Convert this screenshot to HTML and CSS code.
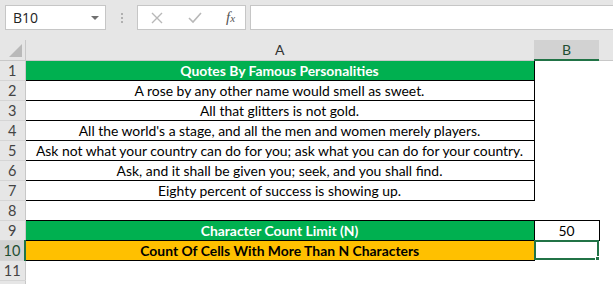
FILE: index.html
```html
<!DOCTYPE html>
<html lang="en">
<head>
    <meta charset="UTF-8">
    <title>Book1</title>
    <link rel="stylesheet" href="styles.css">
</head>
<body>
<div class="formula-bar">
    <div class="name-box">
        <span>B10</span>
        <span class="arrow"></span>
    </div>
    <div class="grip"><i></i><i></i><i></i></div>
    <div class="fx-box">
        <svg class="btn-x" width="12" height="12" viewBox="0 0 12 12"><path d="M1 1L11 11M11 1L1 11" stroke="#b8b8b8" stroke-width="1.4" fill="none"/></svg>
        <svg class="btn-ok" width="14" height="12" viewBox="0 0 14 12"><path d="M1 6L5 10L13 1" stroke="#b8b8b8" stroke-width="1.6" fill="none"/></svg>
        <span class="fx">f<sub>x</sub></span>
    </div>
    <div class="formula-input"></div>
</div>

<table class="sheet">
    <colgroup>
        <col class="c-head">
        <col class="c-a">
        <col class="c-b">
        <col>
    </colgroup>
    <tr class="col-heads">
        <th class="corner"><span class="tri"></span></th>
        <th>A</th>
        <th class="sel-head">B</th>
        <th></th>
    </tr>
    <tr>
        <th>1</th>
        <td class="box green title">Quotes By Famous Personalities</td>
        <td></td><td></td>
    </tr>
    <tr>
        <th>2</th>
        <td class="box">A rose by any other name would smell as sweet.</td>
        <td></td><td></td>
    </tr>
    <tr>
        <th>3</th>
        <td class="box">All that glitters is not gold.</td>
        <td></td><td></td>
    </tr>
    <tr>
        <th>4</th>
        <td class="box">All the world's a stage, and all the men and women merely players.</td>
        <td></td><td></td>
    </tr>
    <tr>
        <th>5</th>
        <td class="box">Ask not what your country can do for you; ask what you can do for your country.</td>
        <td></td><td></td>
    </tr>
    <tr>
        <th>6</th>
        <td class="box">Ask, and it shall be given you; seek, and you shall find.</td>
        <td></td><td></td>
    </tr>
    <tr>
        <th>7</th>
        <td class="box">Eighty percent of success is showing up.</td>
        <td></td><td></td>
    </tr>
    <tr>
        <th>8</th>
        <td></td><td></td><td></td>
    </tr>
    <tr>
        <th>9</th>
        <td class="box green title">Character Count Limit (N)</td>
        <td class="box">50</td>
        <td></td>
    </tr>
    <tr>
        <th class="sel-row">10</th>
        <td class="box orange title">Count Of Cells With More Than N Characters</td>
        <td class="active"></td>
        <td></td>
    </tr>
    <tr>
        <th>11</th>
        <td></td><td></td><td></td>
    </tr>
    <tr>
        <th></th>
        <td></td><td></td><td></td>
    </tr>
</table>
</body>
</html>
```

FILE: styles.css
```css
* {
    padding: 0;
    margin: 0;
    box-sizing: border-box;
}
body {
    width: 613px;
    height: 284px;
    overflow: hidden;
    background: #e6e6e6;
    font-family: Lato, "Liberation Sans", sans-serif;
}

/* formula bar */
.formula-bar {
    display: flex;
    align-items: center;
    height: 40px;
    padding: 0 0 5px 5px;
}
.name-box {
    width: 101px;
    height: 25px;
    background: #fff;
    border: 1px solid #c6c6c6;
    display: flex;
    align-items: center;
    justify-content: space-between;
    padding: 0 6px 0 7px;
    font-family: "Open Sans", "Liberation Sans", sans-serif;
    font-size: 14px;
    color: #222;
}
.arrow {
    width: 0;
    height: 0;
    border-left: 4px solid transparent;
    border-right: 4px solid transparent;
    border-top: 4px solid #707070;
}
.grip {
    width: 31px;
    display: flex;
    flex-direction: column;
    align-items: center;
    gap: 2px;
}
.grip i {
    width: 2px;
    height: 2px;
    background: #b0b0b0;
}
.fx-box {
    width: 109px;
    height: 25px;
    background: #fff;
    border: 1px solid #c6c6c6;
    display: flex;
    align-items: center;
    padding-left: 13px;
}
.btn-x {
    margin-right: 25px;
}
.btn-ok {
    margin-right: 24px;
}
.fx {
    font-family: "Liberation Serif", serif;
    font-style: italic;
    font-size: 15px;
    color: #555;
    line-height: 1;
}
.fx sub {
    font-size: 11px;
    vertical-align: baseline;
}
.formula-input {
    flex: 1;
    height: 25px;
    margin-left: 4px;
    background: #fff;
    border: 1px solid #c6c6c6;
    border-right: none;
}

/* sheet */
.sheet {
    border-collapse: collapse;
    table-layout: fixed;
    width: 613px;
    background: #fff;
    font-size: 13.9px;
}
.c-head { width: 25px; }
.c-a { width: 509px; }
.c-b { width: 65px; }
.sheet tr {
    height: 20px;
}
.sheet td {
    padding: 0 2px;
    text-align: center;
    white-space: nowrap;
    overflow: hidden;
    color: #000;
    line-height: 19px;
}
.sheet th {
    background: #e6e6e6;
    font-weight: normal;
    font-size: 14.5px;
    color: #444;
    border-bottom: 1px solid #d5d5d5;
    border-right: 1px solid #c8c8c8;
}
.col-heads th {
    border-right: none;
    border-bottom: 1px solid #c8c8c8;
    font-size: 14px;
    color: #333;
}
.col-heads th.corner {
    border-right: 1px solid #c8c8c8;
    position: relative;
}
.tri {
    position: absolute;
    right: 3px;
    bottom: 3px;
    width: 0;
    height: 0;
    border-left: 13px solid transparent;
    border-bottom: 13px solid #b9b9b9;
}
.col-heads th.sel-head {
    background: #d2d2d2;
    border-bottom: 2px solid #217346;
    color: #1e4e33;
}
.sheet th.sel-row {
    background: #d2d2d2;
    border-right: 2px solid #217346;
    color: #1e4e33;
}
.box {
    border: 1px solid #000;
}
.green {
    background: #00b050;
    color: #fff !important;
}
.orange {
    background: #ffc000;
}
.title {
    font-weight: bold;
}
.active {
    position: relative;
    outline: 2px solid #217346;
    outline-offset: -2px;
}
.active::after {
    content: '';
    position: absolute;
    right: -3px;
    bottom: -3px;
    width: 5px;
    height: 5px;
    background: #217346;
    border: 1px solid #fff;
}
```
